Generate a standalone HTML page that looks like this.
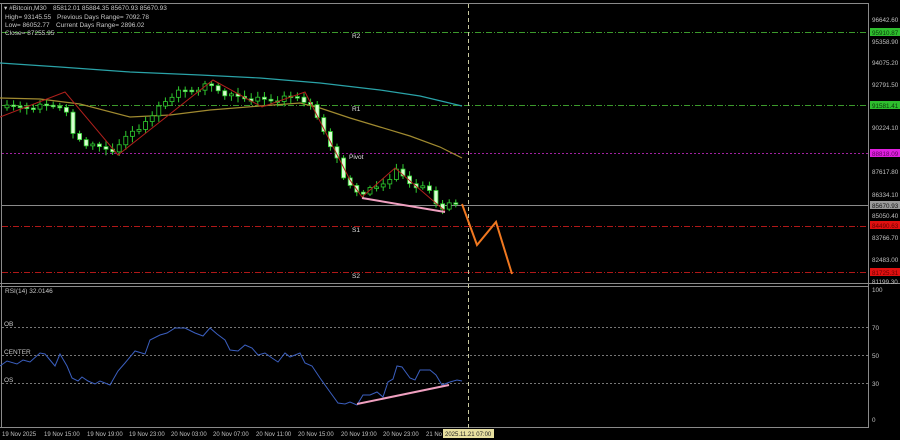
<!DOCTYPE html>
<html><head><meta charset="utf-8"><style>
html,body{margin:0;padding:0;background:#000;width:900px;height:440px;overflow:hidden}
svg{display:block}
text{font-family:"Liberation Sans",sans-serif}
</style></head><body>
<svg id="s" width="900" height="440" xmlns="http://www.w3.org/2000/svg">
<rect width="900" height="440" fill="#000"/>
<line x1="0" y1="3.5" x2="868" y2="3.5" stroke="#8a8a8a"/>
<line x1="1.5" y1="3" x2="1.5" y2="428" stroke="#8a8a8a"/>
<line x1="868.5" y1="3" x2="868.5" y2="428" stroke="#8a8a8a"/>
<line x1="0" y1="283.5" x2="900" y2="283.5" stroke="#8a8a8a"/>
<line x1="0" y1="286.5" x2="868" y2="286.5" stroke="#8a8a8a"/>
<line x1="0" y1="427.5" x2="868" y2="427.5" stroke="#8a8a8a"/>
<g stroke-width="1" stroke-dasharray="6,2,1,2">
<line x1="2" y1="32.5" x2="868" y2="32.5" stroke="#3c9a2c"/>
<line x1="2" y1="105.5" x2="868" y2="105.5" stroke="#3c9a2c"/>
<line x1="2" y1="226.5" x2="868" y2="226.5" stroke="#b01818"/>
<line x1="2" y1="272.5" x2="868" y2="272.5" stroke="#b01818"/>
</g>
<line x1="2" y1="153.5" x2="868" y2="153.5" stroke="#a020a0" stroke-dasharray="2,2"/>
<line x1="2" y1="205.5" x2="868" y2="205.5" stroke="#8a8a8a"/>
<g stroke="#777" stroke-dasharray="2,2">
<line x1="2" y1="327.5" x2="868" y2="327.5"/>
<line x1="2" y1="355.5" x2="868" y2="355.5"/>
<line x1="2" y1="383.5" x2="868" y2="383.5"/>
</g>
<line x1="468.5" y1="4" x2="468.5" y2="428" stroke="#c8c8a0" stroke-dasharray="4,3"/>
<polyline fill="none" stroke="#2aa3a8" stroke-width="1.2" points="0,63 60,67 130,72 200,75 260,78 320,83 380,90 420,96 462,106"/>
<polyline fill="none" stroke="#a08a30" stroke-width="1.2" points="0,98 40,99 80,104 130,117 170,115 210,110 260,106 300,103 320,108 350,118 380,127 410,136 440,147 462,158"/>
<g id="candles"></g>
<polyline fill="none" stroke="#b0201c" stroke-width="1" points="0,117 65,92 118,155 213,80 262,107 305,92 350,180 362,197 395,168 445,211"/>
<line x1="362" y1="198" x2="445" y2="212" stroke="#f0a0c0" stroke-width="2"/>
<polyline fill="none" stroke="#f07820" stroke-width="2" points="462,204 477,245 496,222 512,274"/>
<polyline fill="none" stroke="#3b5fbf" stroke-width="1" points="0,366 7,361 17,364 23,360 30,362 40,353 45,354 55,366 60,354 67,366 72,378 78,381 82,377 88,381 95,384 100,381 110,385 118,371 125,363 135,351 145,354 150,340 160,335 167,333 175,328 185,328 195,333 203,336 210,328 217,334 225,340 230,350 238,351 245,345 252,348 258,355 265,353 272,358 278,362 285,353 290,357 300,353 305,363 312,366 320,378 330,392 338,403 345,404 350,402 357,405 363,395 370,395 377,392 383,397 388,382 393,379 397,366 402,367 410,378 415,380 420,370 430,370 436,375 442,385 450,382 457,380 462,381"/>
<line x1="357" y1="404" x2="449" y2="385" stroke="#f0a0c0" stroke-width="2"/>
<g fill="#c8c8c8" font-size="6.5">
<text x="4" y="10">▾ #Bitcoin,M30</text><text x="53" y="10">85812.01 85884.35 85670.93 85670.93</text>
<text x="5" y="19">High= 93145.55</text><text x="57" y="19">Previous Days Range= 7092.78</text>
<text x="5" y="27">Low= 86052.77</text><text x="56" y="27">Current Days Range= 2896.02</text>
<text x="5" y="35">Close= 87255.95</text>
<text x="5" y="293">RSI(14) 32.0146</text>
<text x="4" y="326">OB</text>
<text x="4" y="354">CENTER</text>
<text x="4" y="382">OS</text>
</g>
<g fill="#e0e0e0" font-size="6.5">
<text x="352" y="38">R2</text><text x="352" y="111">R1</text><text x="349" y="159">Pivot</text>
<text x="352" y="232">S1</text><text x="352" y="278">S2</text>
</g>
<g fill="#c0c0c0" font-size="6.3">
<text x="872" y="22">96642.60</text><text x="872" y="44">95358.90</text><text x="872" y="65">94075.20</text>
<text x="872" y="87">92791.50</text><text x="872" y="130">90224.10</text><text x="872" y="174">87617.80</text>
<text x="872" y="197">86334.10</text><text x="872" y="218">85050.40</text><text x="872" y="240">83766.70</text>
<text x="872" y="262">82483.00</text><text x="872" y="284">81199.30</text>
<text x="872" y="292">100</text><text x="872" y="330">70</text><text x="872" y="358">50</text><text x="872" y="386">30</text><text x="872" y="422">0</text>
</g>
<g font-size="6.3">
<rect x="870" y="28" width="30" height="8" fill="#2ebd2e"/><text x="872" y="35" fill="#0a3a0a">95910.87</text>
<rect x="870" y="101" width="30" height="8" fill="#2ebd2e"/><text x="872" y="108" fill="#0a3a0a">91581.41</text>
<rect x="870" y="149" width="30" height="8" fill="#e020e0"/><text x="872" y="156" fill="#600060">88818.09</text>
<rect x="870" y="201" width="30" height="8" fill="#9a9a9a"/><text x="872" y="208" fill="#111">85670.93</text>
<rect x="870" y="221" width="30" height="8" fill="#e01010"/><text x="872" y="228" fill="#600">84490.63</text>
<rect x="870" y="268" width="30" height="8" fill="#e01010"/><text x="872" y="275" fill="#600">81725.31</text>
</g>
<g fill="#c0c0c0" font-size="6">
<text x="2" y="436">19 Nov 2025</text><text x="44" y="436">19 Nov 15:00</text><text x="87" y="436">19 Nov 19:00</text>
<text x="129" y="436">19 Nov 23:00</text><text x="171" y="436">20 Nov 03:00</text><text x="213" y="436">20 Nov 07:00</text>
<text x="256" y="436">20 Nov 11:00</text><text x="298" y="436">20 Nov 15:00</text><text x="341" y="436">20 Nov 19:00</text>
<text x="383" y="436">20 Nov 23:00</text><text x="426" y="436">21 No</text>
</g>
<rect x="443" y="429" width="51" height="9" fill="#e8e0a0"/><text x="445" y="436" font-size="6" fill="#222">2025.11.21 07:00</text>
</svg>
<script>
var pts=[[0,108],[30,106],[65,104],[72,132],[90,145],[118,150],[130,132],[150,122],[160,105],[175,92],[195,88],[210,84],[230,95],[250,98],[270,100],[300,96],[310,104],[322,125],[335,152],[345,180],[360,192],[380,186],[398,170],[410,182],[430,190],[440,208],[447,205],[462,204]];
function f(x){for(var i=1;i<pts.length;i++){if(x<=pts[i][0]){var a=pts[i-1],b=pts[i];return a[1]+(b[1]-a[1])*(x-a[0])/(b[0]-a[0]);}}return 204;}
var g=document.getElementById('candles'),h='',prev=f(3);
for(var x=5;x<=460;x+=6.6){var c=f(x+3)+(((x*7)%5)-2)*1.2;var o=prev;var t=Math.min(o,c),b=Math.max(o,c);if(b-t<1.5)b=t+1.5;
var hi=t-2-((x*3)%4),lo=b+2+((x*5)%4);
h+='<line x1="'+(x+2)+'" y1="'+hi+'" x2="'+(x+2)+'" y2="'+lo+'" stroke="#2fcc2f"/>';
h+='<rect x="'+x+'" y="'+t+'" width="4" height="'+(b-t)+'" fill="'+(c>o?'#d8ffd0':'#000')+'" stroke="#2fcc2f" stroke-width="0.8"/>';prev=c;}
g.innerHTML=h;
</script>
</body></html>
